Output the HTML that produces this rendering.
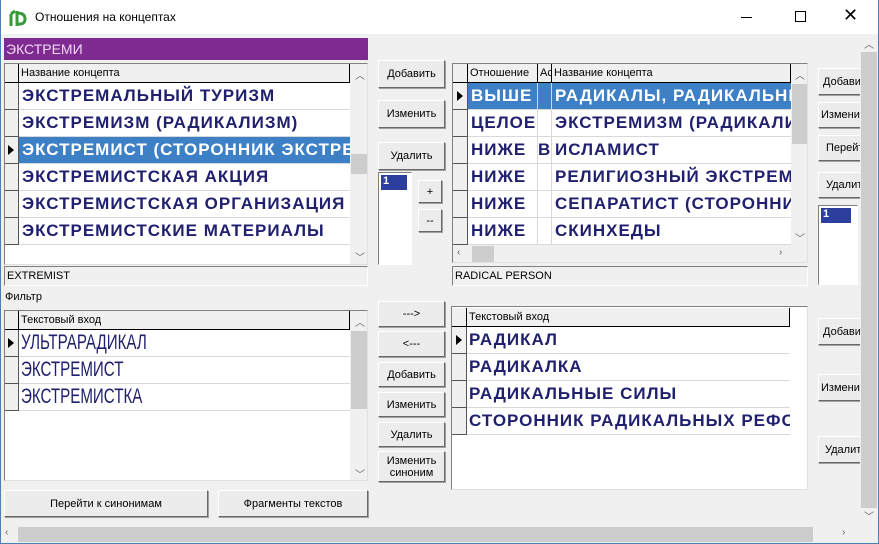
<!DOCTYPE html><html><head><meta charset="utf-8"><style>
*{box-sizing:border-box;margin:0;padding:0}
body{width:879px;height:544px;background:#f0f0f0;font-family:"Liberation Sans",sans-serif;position:relative;overflow:hidden}
.a{position:absolute}
.btn{position:absolute;background:#ececec;border:1px solid #fff;border-right-color:#696969;border-bottom-color:#696969;box-shadow:1px 1px 0 #a0a0a0;font-size:11px;color:#000;display:flex;align-items:center;justify-content:center;text-align:center;overflow:hidden;white-space:nowrap;line-height:12px}
.sunk{position:absolute;border:1px solid #808080;border-right-color:#fff;border-bottom-color:#fff;background:#fff}
.grid{position:absolute;background:#fff;border:1px solid #808080;border-right-color:#e0e0e0;border-bottom-color:#e0e0e0;overflow:hidden}
.hd{position:absolute;height:19px;background:#f0f0f0;border-right:1px solid #000;border-bottom:1px solid #000;font-size:11px;line-height:18px;padding-left:2px;white-space:nowrap;overflow:hidden}
.ind{position:absolute;background:#f0f0f0;border-right:1px solid #555;border-bottom:1px solid #555}
.row{position:absolute;height:27px;border-bottom:1px solid #d8d8d8;font-size:17px;font-weight:bold;color:#20206e;line-height:26px;white-space:nowrap;overflow:hidden;padding-left:3px;letter-spacing:1px}
.sel{background:#3d80c6;color:#fff}
.sb{position:absolute;background:#f0f0f0}
.th{position:absolute;background:#cdcdcd}
.arr{position:absolute;font-size:10px;color:#606060}
.tri{position:absolute;width:0;height:0;border-left:6px solid #000;border-top:5px solid transparent;border-bottom:5px solid transparent}
.nar{font-weight:normal;letter-spacing:0;font-size:21px;padding-left:2px}
.nar span{display:inline-block;transform:scaleX(0.72);transform-origin:left center}
</style></head><body>
<div class="a" style="left:0;top:0;width:879px;height:34px;background:#fff"></div>
<svg class="a" style="left:8px;top:8px" width="20" height="20" viewBox="0 0 20 20"><path d="M3 6 L3 18 M3 6 L7 3" stroke="#3a9a3a" stroke-width="3" fill="none"/><path d="M9 3 L9 18 M9 5 Q17 5 17 11 Q17 17 9 16" stroke="#3a9a3a" stroke-width="3" fill="none"/></svg>
<div class="a" style="left:35px;top:10px;font-size:12px">Отношения на концептах</div>
<div class="a" style="left:741px;top:17px;width:11px;height:1px;background:#000"></div>
<div class="a" style="left:795px;top:11px;width:11px;height:11px;border:1px solid #000"></div>
<div class="a" style="left:843px;top:5px;font-size:18px;font-weight:300">✕</div>

<div class="a" style="left:4px;top:38px;width:364px;height:22px;background:#7e2a90;color:#f0d8f4;font-size:14px;line-height:22px;padding-left:2px">ЭКСТРЕМИ</div>

<div class="grid" style="left:4px;top:63px;width:364px;height:202px">
 <div class="hd" style="left:0;top:0;width:14px"></div>
 <div class="hd" style="left:14px;top:0;width:331px">Название концепта</div>
 <div class="ind" style="left:0;top:19px;width:14px;height:27px"></div>
 <div class="ind" style="left:0;top:46px;width:14px;height:27px"></div>
 <div class="ind" style="left:0;top:73px;width:14px;height:27px"><div class="tri" style="left:3px;top:8px"></div></div>
 <div class="ind" style="left:0;top:100px;width:14px;height:27px"></div>
 <div class="ind" style="left:0;top:127px;width:14px;height:27px"></div>
 <div class="ind" style="left:0;top:154px;width:14px;height:27px"></div>
 <div class="row" style="left:14px;top:19px;width:331px">ЭКСТРЕМАЛЬНЫЙ ТУРИЗМ</div>
 <div class="row" style="left:14px;top:46px;width:331px">ЭКСТРЕМИЗМ (РАДИКАЛИЗМ)</div>
 <div class="row sel" style="left:14px;top:73px;width:331px">ЭКСТРЕМИСТ (СТОРОННИК ЭКСТРЕМИЗМА)</div>
 <div class="row" style="left:14px;top:100px;width:331px">ЭКСТРЕМИСТСКАЯ АКЦИЯ</div>
 <div class="row" style="left:14px;top:127px;width:331px">ЭКСТРЕМИСТСКАЯ ОРГАНИЗАЦИЯ</div>
 <div class="row" style="left:14px;top:154px;width:331px">ЭКСТРЕМИСТСКИЕ МАТЕРИАЛЫ</div>
 <div class="sb" style="left:345px;top:0;width:18px;height:200px"></div>
 <div class="th" style="left:346px;top:90px;width:16px;height:20px"></div>
 <div class="arr" style="left:350px;top:3px">︿</div>
 <div class="arr" style="left:350px;top:185px">﹀</div>
</div>
<div class="sunk" style="left:4px;top:266px;width:364px;height:20px;background:#f0f0f0;font-size:11px;line-height:18px;padding-left:2px">EXTREMIST</div>
<div class="a" style="left:5px;top:291px;font-size:11px">Фильтр</div>

<div class="grid" style="left:4px;top:310px;width:364px;height:171px">
 <div class="hd" style="left:0;top:0;width:14px"></div>
 <div class="hd" style="left:14px;top:0;width:331px">Текстовый вход</div>
 <div class="ind" style="left:0;top:19px;width:14px;height:27px"><div class="tri" style="left:3px;top:8px"></div></div>
 <div class="ind" style="left:0;top:46px;width:14px;height:27px"></div>
 <div class="ind" style="left:0;top:73px;width:14px;height:27px"></div>
 <div class="row nar" style="left:14px;top:19px;width:331px"><span>УЛЬТРАРАДИКАЛ</span></div>
 <div class="row nar" style="left:14px;top:46px;width:331px"><span>ЭКСТРЕМИСТ</span></div>
 <div class="row nar" style="left:14px;top:73px;width:331px"><span>ЭКСТРЕМИСТКА</span></div>
 <div class="sb" style="left:345px;top:0;width:18px;height:170px"></div>
 <div class="th" style="left:346px;top:20px;width:16px;height:78px"></div>
 <div class="arr" style="left:350px;top:3px">︿</div>
 <div class="arr" style="left:350px;top:155px">﹀</div>
</div>
<div class="btn" style="left:4px;top:490px;width:204px;height:27px">Перейти к синонимам</div>
<div class="btn" style="left:218px;top:490px;width:150px;height:27px">Фрагменты текстов</div>

<div class="btn" style="left:378px;top:60px;width:67px;height:28px">Добавить</div>
<div class="btn" style="left:378px;top:100px;width:67px;height:28px">Изменить</div>
<div class="btn" style="left:378px;top:142px;width:67px;height:28px">Удалить</div>
<div class="sunk" style="left:378px;top:172px;width:34px;height:93px"><div style="margin:2px;width:26px;height:15px;background:#2d3f9e;color:#fff;font-size:11px;font-weight:bold;padding-left:2px">1</div></div>
<div class="btn" style="left:418px;top:180px;width:24px;height:23px">+</div>
<div class="btn" style="left:418px;top:209px;width:24px;height:23px">--</div>
<div class="btn" style="left:378px;top:301px;width:67px;height:26px">---&gt;</div>
<div class="btn" style="left:378px;top:331px;width:67px;height:26px">&lt;---</div>
<div class="btn" style="left:378px;top:362px;width:67px;height:25px">Добавить</div>
<div class="btn" style="left:378px;top:392px;width:67px;height:25px">Изменить</div>
<div class="btn" style="left:378px;top:422px;width:67px;height:25px">Удалить</div>
<div class="btn" style="left:378px;top:451px;width:67px;height:31px;white-space:normal">Изменить синоним</div>

<div class="grid" style="left:452px;top:63px;width:356px;height:200px">
 <div class="hd" style="left:0;top:0;width:15px"></div>
 <div class="hd" style="left:15px;top:0;width:70px">Отношение</div>
 <div class="hd" style="left:85px;top:0;width:14px">Ас</div>
 <div class="hd" style="left:99px;top:0;width:239px">Название концепта</div>
 <div class="ind" style="left:0;top:19px;width:15px;height:27px"><div class="tri" style="left:4px;top:8px"></div></div>
 <div class="ind" style="left:0;top:46px;width:15px;height:27px"></div>
 <div class="ind" style="left:0;top:73px;width:15px;height:27px"></div>
 <div class="ind" style="left:0;top:100px;width:15px;height:27px"></div>
 <div class="ind" style="left:0;top:127px;width:15px;height:27px"></div>
 <div class="ind" style="left:0;top:154px;width:15px;height:27px"></div>
 <div class="row sel" style="left:15px;top:19px;width:70px;border-right:1px solid #d8d8d8">ВЫШЕ</div>
 <div class="row sel" style="left:85px;top:19px;width:14px;border-right:1px solid #d8d8d8"></div>
 <div class="row sel" style="left:99px;top:19px;width:239px">РАДИКАЛЫ, РАДИКАЛЬНЫЕ</div>
 <div class="row" style="left:15px;top:46px;width:70px;border-right:1px solid #d8d8d8">ЦЕЛОЕ</div>
 <div class="row" style="left:85px;top:46px;width:14px;border-right:1px solid #d8d8d8"></div>
 <div class="row" style="left:99px;top:46px;width:239px">ЭКСТРЕМИЗМ (РАДИКАЛИЗМ)</div>
 <div class="row" style="left:15px;top:73px;width:70px;border-right:1px solid #d8d8d8">НИЖЕ</div>
 <div class="row" style="left:85px;top:73px;width:14px;border-right:1px solid #d8d8d8;padding-left:0">В</div>
 <div class="row" style="left:99px;top:73px;width:239px">ИСЛАМИСТ</div>
 <div class="row" style="left:15px;top:100px;width:70px;border-right:1px solid #d8d8d8">НИЖЕ</div>
 <div class="row" style="left:85px;top:100px;width:14px;border-right:1px solid #d8d8d8"></div>
 <div class="row" style="left:99px;top:100px;width:239px">РЕЛИГИОЗНЫЙ ЭКСТРЕМИСТ</div>
 <div class="row" style="left:15px;top:127px;width:70px;border-right:1px solid #d8d8d8">НИЖЕ</div>
 <div class="row" style="left:85px;top:127px;width:14px;border-right:1px solid #d8d8d8"></div>
 <div class="row" style="left:99px;top:127px;width:239px">СЕПАРАТИСТ (СТОРОННИК</div>
 <div class="row" style="left:15px;top:154px;width:70px;border-right:1px solid #d8d8d8">НИЖЕ</div>
 <div class="row" style="left:85px;top:154px;width:14px;border-right:1px solid #d8d8d8"></div>
 <div class="row" style="left:99px;top:154px;width:239px">СКИНХЕДЫ</div>
 <div class="sb" style="left:338px;top:0;width:18px;height:182px"></div>
 <div class="th" style="left:339px;top:20px;width:16px;height:60px"></div>
 <div class="arr" style="left:342px;top:3px">︿</div>
 <div class="arr" style="left:342px;top:166px">﹀</div>
 <div class="sb" style="left:0;top:181px;width:356px;height:18px"></div>
 <div class="th" style="left:19px;top:182px;width:22px;height:16px"></div>
 <div class="arr" style="left:4px;top:183px">‹</div>
 <div class="arr" style="left:326px;top:183px">›</div>
</div>
<div class="sunk" style="left:452px;top:266px;width:356px;height:20px;background:#f0f0f0;font-size:11px;line-height:18px;padding-left:2px">RADICAL PERSON</div>

<div class="grid" style="left:451px;top:306px;width:357px;height:184px">
 <div class="hd" style="left:0;top:1px;width:15px"></div>
 <div class="hd" style="left:15px;top:1px;width:323px">Текстовый вход</div>
 <div class="ind" style="left:0;top:20px;width:15px;height:27px"><div class="tri" style="left:4px;top:8px"></div></div>
 <div class="ind" style="left:0;top:47px;width:15px;height:27px"></div>
 <div class="ind" style="left:0;top:74px;width:15px;height:27px"></div>
 <div class="ind" style="left:0;top:101px;width:15px;height:27px"></div>
 <div class="row" style="left:15px;top:20px;width:323px;padding-left:2px">РАДИКАЛ</div>
 <div class="row" style="left:15px;top:47px;width:323px;padding-left:2px">РАДИКАЛКА</div>
 <div class="row" style="left:15px;top:74px;width:323px;padding-left:2px">РАДИКАЛЬНЫЕ СИЛЫ</div>
 <div class="row" style="left:15px;top:101px;width:323px;padding-left:2px">СТОРОННИК РАДИКАЛЬНЫХ РЕФОРМ</div>
</div>

<div class="btn" style="left:818px;top:68px;width:44px;height:27px;justify-content:flex-start;padding-left:4px">Добавить</div>
<div class="btn" style="left:818px;top:102px;width:44px;height:26px;justify-content:flex-start;padding-left:2px">Изменить</div>
<div class="btn" style="left:818px;top:135px;width:44px;height:26px;justify-content:flex-start;padding-left:7px">Перейти</div>
<div class="btn" style="left:818px;top:172px;width:44px;height:26px;justify-content:flex-start;padding-left:7px">Удалить</div>
<div class="sunk" style="left:818px;top:205px;width:40px;height:80px"><div style="margin:2px;width:30px;height:15px;background:#2d3f9e;color:#fff;font-size:11px;font-weight:bold;padding-left:2px">1</div></div>
<div class="btn" style="left:818px;top:318px;width:44px;height:27px;justify-content:flex-start;padding-left:4px">Добавить</div>
<div class="btn" style="left:818px;top:374px;width:44px;height:27px;justify-content:flex-start;padding-left:2px">Изменить</div>
<div class="btn" style="left:818px;top:436px;width:44px;height:27px;justify-content:flex-start;padding-left:6px">Удалить</div>

<div class="sb" style="left:860px;top:34px;width:18px;height:492px"></div>
<div class="th" style="left:861px;top:52px;width:16px;height:456px"></div>
<div class="arr" style="left:864px;top:36px">︿</div>
<div class="arr" style="left:864px;top:508px">﹀</div>
<div class="sb" style="left:0;top:526px;width:860px;height:17px"></div>
<div class="th" style="left:18px;top:527px;width:795px;height:15px"></div>
<div class="arr" style="left:5px;top:527px">‹</div>
<div class="arr" style="left:842px;top:527px">›</div>
<div class="a" style="left:0;top:0;width:879px;height:544px;border:1px solid #4a7fb8;border-top:none;pointer-events:none"></div>
</body></html>
